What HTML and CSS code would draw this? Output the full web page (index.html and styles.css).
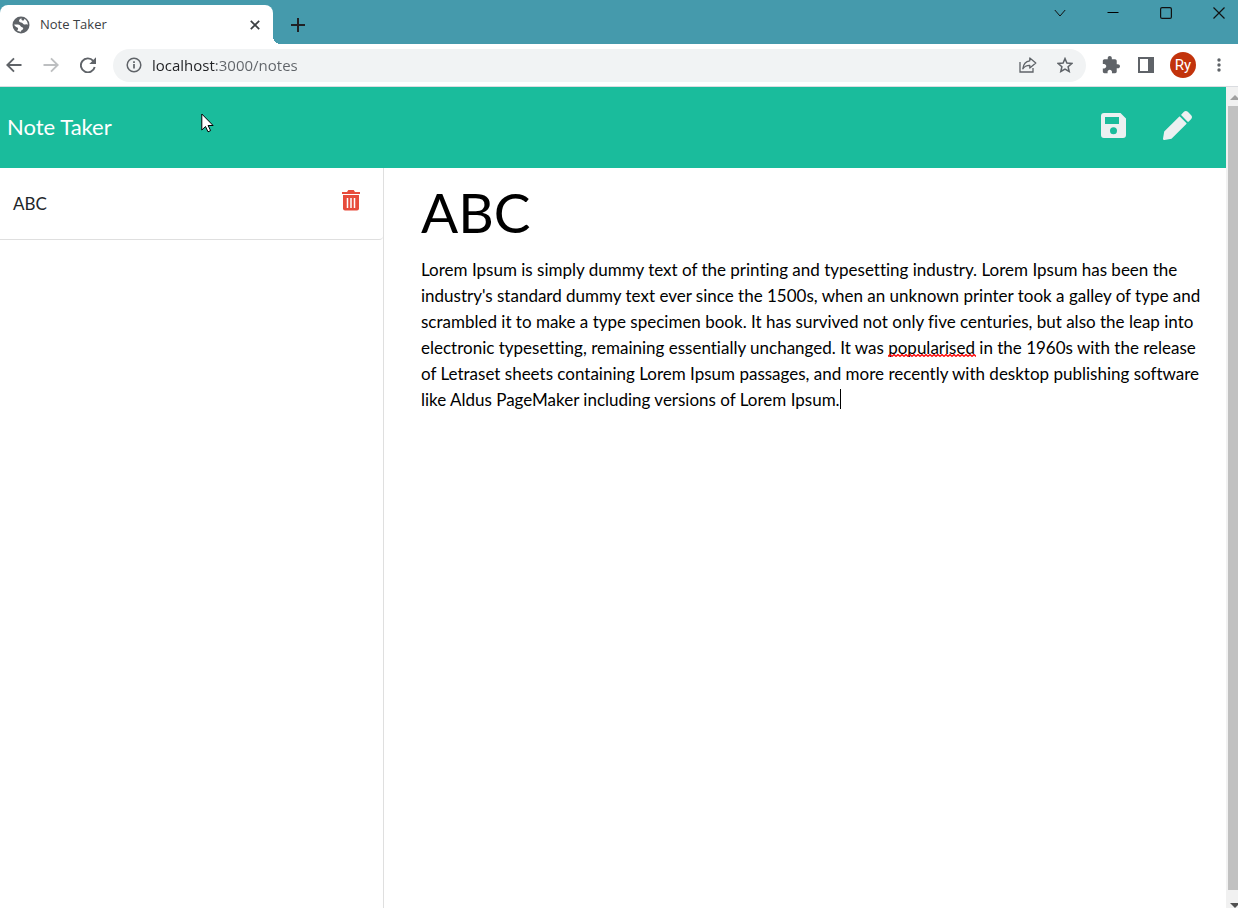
FILE: index.html
```html
<!DOCTYPE html>
<html lang="en">
<head>
<meta charset="utf-8">
<title>Note Taker</title>
<link rel="stylesheet" href="styles.css">
</head>
<body>
<div class="tab-strip">
  <div class="tab">
    <svg class="globe" width="18" height="18" viewBox="0 0 18 18"><circle cx="9" cy="9" r="8.500" fill="#5f6368"/><path d="M9.500 2.200C7 3.200 6.600 4.700 7.400 5.700c.9 1 2.400.6 3.200 1.500.7 1 1.700 1.500 2.900 1.200.9-.3 1.700-.2 2.300.4.200-2.700-1.400-5-3.600-6.100.2 1.300-.6 2-1.600 1.900-.9-.2-1.300-1.100-1.100-2.400z" fill="#fff"/><path d="M2.200 8.600c1.500-.2 4-.3 5.300.4 1 .6.900 1.600 2 1.900 1.200.3 1.900.8 1.700 1.800-.2 1.200-2.200 1-2.300 3-1.700 0-2.900-.5-4-1.400.9-.4 1.400-1.200 1.100-2.100C5.500 11 3 11.400 2.200 8.600z" fill="#fff"/></svg>
    <span class="tab-title">Note Taker</span>
    <button class="icon-btn tab-close" aria-label="Close tab"><svg width="10" height="10" viewBox="0 0 10 10"><path d="M.8.8l8.400 8.400M9.200.8L.8 9.200" stroke="#3c4043" stroke-width="1.700"/></svg></button>
  </div>
  <button class="icon-btn new-tab" aria-label="New tab"><svg width="14" height="14" viewBox="0 0 14 14"><path d="M7 0v14M0 7h14" stroke="#202124" stroke-width="2"/></svg></button>
  <div class="window-controls">
    <button class="icon-btn" aria-label="Search tabs"><svg width="12" height="12" viewBox="0 0 12 12" fill="none" stroke="#111"><path d="M.8 3l5.200 6 5.200-6"/></svg></button>
    <button class="icon-btn" aria-label="Minimize"><svg width="12" height="12" viewBox="0 0 12 12"><path d="M.5 5.500h11" stroke="#000"/></svg></button>
    <button class="icon-btn" aria-label="Maximize"><svg width="12" height="12" viewBox="0 0 12 12" fill="none" stroke="#111"><rect x=".6" y=".6" width="10.800" height="10.800" rx="1.500" stroke-width="1.200"/></svg></button>
    <button class="icon-btn" aria-label="Close window"><svg width="12" height="12" viewBox="0 0 12 12"><path d="M.5.5l11 11M11.500.5l-11 11" stroke="#111" stroke-width="1.200"/></svg></button>
  </div>
</div>
<div class="toolbar">
  <div class="nav-buttons">
    <button class="icon-btn" aria-label="Back"><svg width="16" height="16" viewBox="0 0 16 16" fill="none" stroke="#5f6368" stroke-width="1.900"><path d="M15.500 8H2M8 1.300L1.300 8 8 14.700"/></svg></button>
    <button class="icon-btn" aria-label="Forward"><svg width="16" height="16" viewBox="0 0 16 16" fill="none" stroke="#bdbfc1" stroke-width="1.900"><path d="M.5 8H14M8 1.300L14.700 8 8 14.700"/></svg></button>
    <button class="icon-btn" aria-label="Reload"><svg width="16" height="16" viewBox="0 0 16 16"><path d="M13.200 3.800A7 7 0 1 0 14.700 10" fill="none" stroke="#5f6368" stroke-width="1.900"/><path d="M16 .300V7H9.300z" fill="#5f6368"/></svg></button>
  </div>
  <div class="address">
    <svg width="16" height="16" viewBox="0 0 16 16"><circle cx="8" cy="8" r="6.800" fill="none" stroke="#5f6368" stroke-width="1.500"/><path d="M8 7v4.500M8 4.200v1.800" stroke="#5f6368" stroke-width="1.700"/></svg>
    <input class="url" type="text" aria-label="Address" value="localhost:3000/notes">
    <button class="icon-btn" aria-label="Share"><svg width="18" height="16" viewBox="0 0 18 16" fill="none" stroke="#5f6368" stroke-width="1.300"><path d="M1 5v10h13v-4"/><path d="M10.800 1l6 5-6 5V8.300C7.500 8.200 5.500 9.200 3.800 11.800 4.300 7.500 6.500 4.300 10.800 3.800z" stroke-linejoin="round"/></svg></button>
    <button class="icon-btn" aria-label="Bookmark"><svg width="16" height="16" viewBox="0 0 16 16" fill="none" stroke="#5f6368" stroke-width="1.500"><path d="M8 1.600l1.900 4.500 4.900.4-3.700 3.200 1.100 4.800L8 12l-4.200 2.500 1.100-4.800L1.200 6.500l4.900-.4z"/></svg></button>
  </div>
  <div class="extensions">
    <button class="icon-btn" aria-label="Extensions"><svg width="18" height="18" viewBox="1 1 22 22" fill="#5f6368"><path d="M20.500 11H19V7c0-1.100-.9-2-2-2h-4V3.500C13 2.120 11.880 1 10.500 1S8 2.120 8 3.500V5H4c-1.100 0-1.990.9-1.990 2v3.800H3.500c1.490 0 2.700 1.210 2.700 2.700s-1.210 2.700-2.700 2.700H2V20c0 1.100.9 2 2 2h3.800v-1.500c0-1.490 1.210-2.700 2.700-2.700s2.700 1.210 2.700 2.700V22H17c1.100 0 2-.9 2-2v-4h1.500c1.380 0 2.500-1.120 2.500-2.500S21.880 11 20.500 11z"/></svg></button>
    <button class="icon-btn" aria-label="Side panel"><svg width="16" height="16" viewBox="0 0 16 16"><path d="M0 0h16v16H0zM2 2v12h8V2z" fill="#5f6368" fill-rule="evenodd"/></svg></button>
    <button class="icon-btn avatar">Ry</button>
    <button class="icon-btn" aria-label="Menu"><svg width="4" height="14" viewBox="0 0 4 14" fill="#5f6368"><circle cx="2" cy="2" r="1.700"/><circle cx="2" cy="7" r="1.700"/><circle cx="2" cy="12" r="1.700"/></svg></button>
  </div>
</div>
<div class="viewport">
  <div class="page">
    <nav class="navbar">
      <a class="brand" href="#">Note Taker</a>
      <button class="icon-btn" aria-label="Save note"><svg width="25" height="25" viewBox="0 0 25 25"><path d="M3 0h16.500L25 5.500V22a3 3 0 0 1-3 3H3a3 3 0 0 1-3-3V3a3 3 0 0 1 3-3zM4 4v7h14V4zM12.500 14.200a3.500 3.500 0 1 0 0 7 3.500 3.500 0 0 0 0-7z" fill="#ecf0f1" fill-rule="evenodd"/></svg></button>
      <button class="icon-btn" aria-label="New note"><svg width="29" height="29" viewBox="0 0 512 512" fill="#ecf0f1"><path d="M497.900 142.100l-46.100 46.100c-4.700 4.700-12.300 4.700-17 0l-111-111c-4.700-4.700-4.700-12.300 0-17l46.100-46.100c18.700-18.700 49.100-18.700 67.900 0l60.100 60.100c18.800 18.700 18.800 49.100 0 67.900zM284.200 99.800L21.600 362.400.4 483.900c-2.900 16.400 11.400 30.600 27.800 27.800l121.500-21.300 262.600-262.600c4.700-4.700 4.700-12.300 0-17l-111-111c-4.800-4.700-12.400-4.700-17.100 0z"/></svg></button>
    </nav>
    <div class="columns">
      <aside class="sidebar">
        <ul class="note-list">
          <li class="note">
            <span>ABC</span>
            <button class="icon-btn" aria-label="Delete ABC"><svg width="18" height="21" viewBox="0 0 18 21"><path d="M0 2h5l1.300-2h5.400L13 2h5v2H0z" fill="#e74c3c"/><path d="M1 5h16v13.500a2 2 0 0 1-2 2H3a2 2 0 0 1-2-2z" fill="#e74c3c"/><path d="M5.500 8v10M9 8v10M12.500 8v10" stroke="#fff" stroke-width="1.500"/></svg></button>
          </li>
        </ul>
      </aside>
      <main class="editor">
        <input class="note-title" type="text" aria-label="Note title" value="ABC">
        <div class="note-body">
          <textarea class="note-text" aria-label="Note text" spellcheck="false">Lorem Ipsum is simply dummy text of the printing and typesetting industry. Lorem Ipsum has been the industry's standard dummy text ever since the 1500s, when an unknown printer took a galley of type and scrambled it to make a type specimen book. It has survived not only five centuries, but also the leap into electronic typesetting, remaining essentially unchanged. It was popularised in the 1960s with the release of Letraset sheets containing Lorem Ipsum passages, and more recently with desktop publishing software like Aldus PageMaker including versions of Lorem Ipsum.</textarea>
          <svg class="spelling" width="88" height="3" viewBox="0 0 88 3"><defs><pattern id="wave" width="4" height="3" patternUnits="userSpaceOnUse"><path d="M0 2.500l2-2 2 2" fill="none" stroke="#f00" stroke-width="1.300"/></pattern></defs><rect width="88" height="3" fill="url(#wave)"/></svg>
          <span class="caret"></span>
        </div>
      </main>
    </div>
  </div>
  <div class="scrollbar">
    <svg width="10" height="5" viewBox="0 0 10 5"><path d="M0 5l5-5 5 5z" fill="#a0a0a0"/></svg>
    <div class="thumb"></div>
    <svg width="10" height="5" viewBox="0 0 10 5"><path d="M0 0h10L5 5z" fill="#505050"/></svg>
  </div>
</div>
<svg class="pointer" width="13" height="20" viewBox="0 0 13 20"><path d="M.8 1v16l3.700-3.500 2.500 5.300 2.600-1.200-2.500-5.100h5z" fill="#fff" stroke="#000"/></svg>
</body>
</html>
```

FILE: styles.css
```css
* { box-sizing: border-box; }
body {
  margin: 0;
  height: 100vh;
  display: flex;
  flex-direction: column;
  overflow: hidden;
  background: #fff;
  color: #212529;
  font-family: Lato, sans-serif;
  font-size: 17px;
}
svg { display: block; flex: none; }
.icon-btn {
  display: flex;
  align-items: center;
  justify-content: center;
  padding: 0;
  border: 0;
  background: none;
  flex: none;
}

.tab-strip {
  display: flex;
  align-items: flex-start;
  height: 44px;
  flex: none;
  background: #459aac;
}
.tab {
  display: flex;
  align-items: center;
  width: 273px;
  height: 39px;
  margin-top: 5px;
  padding: 0 13px 0 12px;
  gap: 10px;
  border-radius: 8px 8px 0 0;
  background: #fff;
  position: relative;
}
.tab::after {
  content: "";
  position: absolute;
  left: 100%;
  bottom: 0;
  width: 8px;
  height: 8px;
  background: radial-gradient(circle at 100% 0, transparent 8px, #fff 8px);
}
.tab-title {
  flex: 1;
  padding-bottom: 2px;
  color: #3c4043;
  font-family: "Open Sans", sans-serif;
  font-size: 13px;
}
.new-tab { margin: 18px 0 0 18px; }
.window-controls {
  display: flex;
  gap: 41px;
  margin-left: auto;
  padding: 7px 13px 0 0;
}

.toolbar {
  display: flex;
  align-items: center;
  height: 43px;
  flex: none;
  padding: 0 17px 0 6px;
  border-bottom: 1px solid #dadce0;
}
.nav-buttons { display: flex; gap: 21px; width: 107px; }
.address {
  display: flex;
  align-items: center;
  flex: 1;
  height: 33px;
  padding: 0 13px;
  border-radius: 17px;
  background: #f1f3f4;
}
.address .icon-btn { margin-left: 20px; }
.url {
  flex: 1;
  min-width: 0;
  margin-left: 10px;
  padding: 0;
  border: 0;
  outline: 0;
  color: transparent;
  background: linear-gradient(90deg, #202124 64px, #5f6368 64px);
  background-clip: text;
  -webkit-background-clip: text;
  font: 15px/24px "Open Sans", sans-serif;
}
.extensions {
  display: flex;
  align-items: center;
  gap: 18px;
  padding-left: 16px;
}
.extensions .avatar {
  width: 26px;
  height: 26px;
  margin: 0 3px 0 -2px;
  border-radius: 50%;
  background: #c2330c;
  color: #fff;
  font: 15px Roboto, sans-serif;
}

.viewport { display: flex; flex: 1; min-height: 0; }
.page { display: flex; flex-direction: column; flex: 1; min-width: 0; }
.navbar {
  display: flex;
  align-items: center;
  gap: 37px;
  height: 81px;
  flex: none;
  padding: 0 34px 4px 7px;
  background: #1abc9c;
}
.brand {
  margin-right: auto;
  padding-top: 2px;
  color: #fff;
  font-size: 22px;
  text-decoration: none;
}
.columns { display: flex; flex: 1; min-height: 0; }
.sidebar { width: 384px; border-right: 1px solid #dfdfdf; }
.note-list { margin: 0; padding: 0; list-style: none; }
.note {
  display: flex;
  align-items: flex-start;
  justify-content: space-between;
  height: 72px;
  padding: 22px 23px 0 13px;
  border-bottom: 1px solid #dfdfdf;
  border-radius: 0 0 4px 0;
  line-height: 28px;
}
.editor {
  display: flex;
  flex-direction: column;
  flex: 1;
  min-width: 0;
  padding: 9px 20px 0 37px;
}
.note-title {
  width: 100%;
  height: 70px;
  padding: 0;
  border: 0;
  outline: 0;
  color: #000;
  font: 55px/70px Lato, sans-serif;
}
.note-body { flex: 1; position: relative; }
.note-text {
  display: block;
  width: 100%;
  height: 100%;
  padding: 10px 0 0;
  border: 0;
  outline: 0;
  resize: none;
  color: #000;
  background: none;
  font: 17px/26px Lato, sans-serif;
  font-variant-ligatures: none;
}
.spelling { position: absolute; left: 467px; top: 107px; }
.caret {
  position: absolute;
  left: 419px;
  top: 142px;
  width: 1px;
  height: 20px;
  background: #000;
}
.scrollbar {
  display: flex;
  flex-direction: column;
  align-items: flex-end;
  width: 12px;
  flex: none;
  padding: 8px 0 0 2px;
  overflow: hidden;
  background: #f1f1f1;
}
.scrollbar svg { margin-right: -2px; }
.thumb {
  flex: 1;
  width: 100%;
  margin: 6px 0 13px;
  background: #c1c1c1;
}
.pointer { position: absolute; left: 201px; top: 113px; }
```
